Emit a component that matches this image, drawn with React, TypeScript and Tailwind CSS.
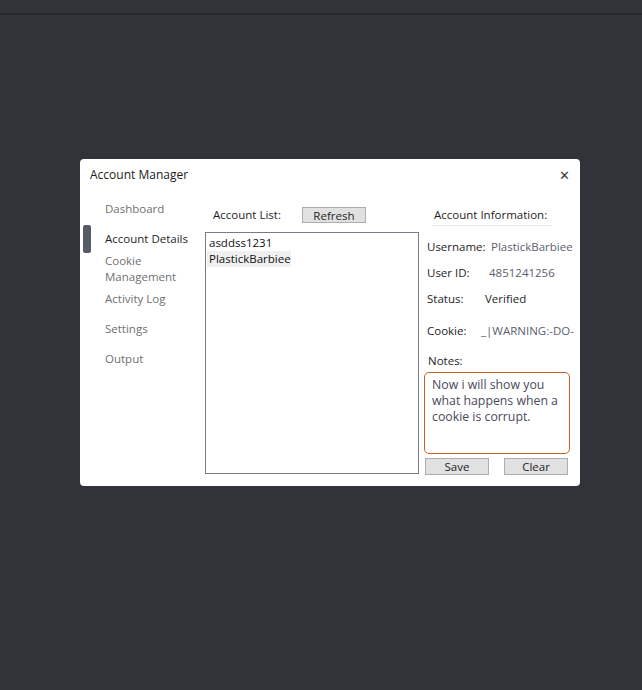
import React from 'react'

const navItems = [
  { label: 'Dashboard', mt: 'mt-[10px]' },
  { label: 'Account Details', mt: 'mt-[14px]', active: true },
  { label: 'Cookie\nManagement', mt: 'mt-[6px]' },
  { label: 'Activity Log', mt: 'mt-[6px]' },
  { label: 'Settings', mt: 'mt-[14px]' },
  { label: 'Output', mt: 'mt-[14px]' },
]

export default function App() {
  return (
    <div
      className="min-h-[690px] w-full bg-[#323338] text-[11.5px] leading-[16px]"
      style={{ fontFamily: '"Open Sans", "Noto Sans", sans-serif' }}
    >
      {/* top strip */}
      <div className="h-[15px] border-b-2 border-[#28292d]" />

      {/* dialog */}
      <div className="ml-[80px] mt-[144px] w-[500px] h-[327px] bg-white rounded-[4px] overflow-hidden">
        <div className="flex h-[32px] items-center justify-between pl-[10px] pr-[10px]">
          <span className="text-[#1b1b1b] text-[12px]">Account Manager</span>
          <span className="text-[#3a3a3a] text-[13px]">✕</span>
        </div>

        <div className="flex">
          {/* sidebar */}
          <div className="w-[125px] flex flex-col">
            {navItems.map((item) => (
              <div
                key={item.label}
                className={`${item.mt} relative pl-[25px] whitespace-pre ${item.active ? 'text-[#1e1e1e]' : 'text-[#707070]'}`}
              >
                {item.active && (
                  <div className="absolute left-[3px] top-[-6px] w-[8px] h-[28px] rounded-[2px] bg-[#575b68]" />
                )}
                {item.label}
              </div>
            ))}
          </div>

          {/* account list */}
          <div className="w-[214px] flex flex-col">
            <div className="mt-[16px] flex items-center h-[16px]">
              <span className="ml-[8px] text-[#1e1e1e]">Account List:</span>
              <button className="ml-[21px] w-[64px] h-[16px] border border-[#adadad] bg-[#e1e1e1] text-[#1e1e1e] leading-[13px]">
                Refresh
              </button>
            </div>
            <div className="mt-[9px] h-[242px] border border-[#7b7b86] pt-[2px] text-[#111]">
              <div className="pl-[3px]">asddss1231</div>
              <div className="ml-[1px] pl-[2px] w-[84px] bg-[#f0f0f0]">PlastickBarbiee</div>
            </div>
          </div>

          {/* account info */}
          <div className="ml-[5px] w-[150px] flex flex-col text-[#1e1e1e] whitespace-nowrap">
            <div className="mt-[16px] ml-[8px] w-[120px] pl-[2px] pb-[2px] border-b border-[#e6e6e6]">
              Account Information:
            </div>
            <div className="mt-[13px] flex pl-[3px]">
              <span className="w-[64px]">Username:</span>
              <span className="text-[#5e5e6e]">PlastickBarbiee</span>
            </div>
            <div className="mt-[10px] flex pl-[3px]">
              <span className="w-[62px]">User ID:</span>
              <span className="text-[#5e5e6e]">4851241256</span>
            </div>
            <div className="mt-[10px] flex pl-[3px]">
              <span className="w-[58px]">Status:</span>
              <span>Verified</span>
            </div>
            <div className="mt-[16px] flex pl-[3px]">
              <span className="w-[54px] shrink-0">Cookie:</span>
              <span className="text-[#5e5e6e]">_|WARNING:-DO-</span>
            </div>
            <div className="mt-[14px] pl-[4px]">Notes:</div>
            <div className="mt-[3px] w-[146px] h-[82px] border border-[#c8602a] rounded-[5px] px-[7px] pt-[4px] text-[12.3px] text-[#4a4a58] whitespace-normal">
              Now i will show you what happens when a cookie is corrupt.
            </div>
            <div className="mt-[4px] flex">
              <button className="ml-[1px] w-[64px] h-[17px] border border-[#adadad] bg-[#e1e1e1] leading-[14px]">
                Save
              </button>
              <button className="ml-[15px] w-[64px] h-[17px] border border-[#adadad] bg-[#e1e1e1] leading-[14px]">
                Clear
              </button>
            </div>
          </div>
        </div>
      </div>
    </div>
  )
}
